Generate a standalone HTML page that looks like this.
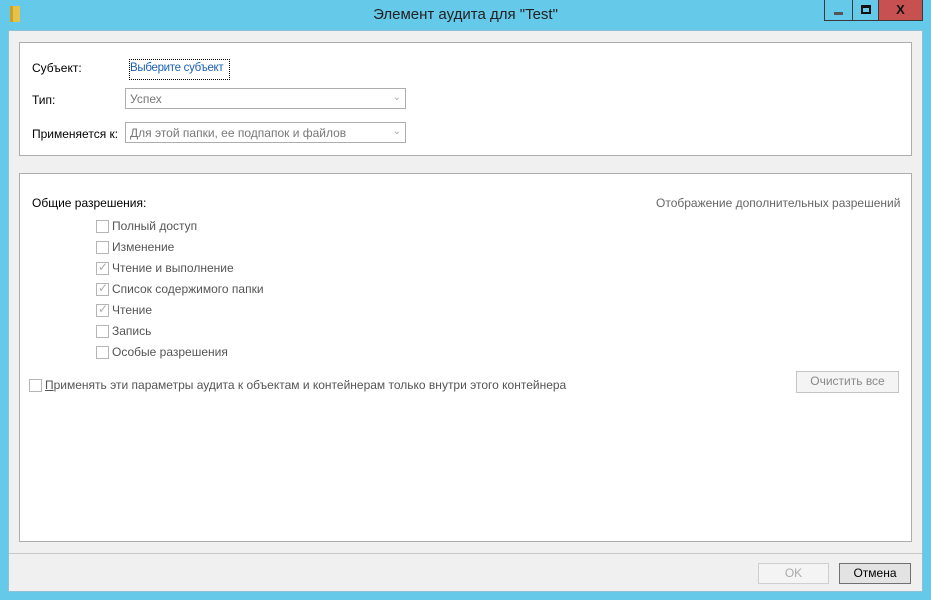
<!DOCTYPE html>
<html><head><meta charset="utf-8"><style>
*{margin:0;padding:0;box-sizing:border-box}
body{width:931px;height:600px;background:#65c9ea;font-family:"Liberation Sans",sans-serif;font-size:12px;color:#000;position:relative;overflow:hidden}
.a{position:absolute;white-space:nowrap}
.client{left:8px;top:30px;width:915px;height:562px;background:#f0f0f0;border:1px solid #8fc0d6}
.panel{background:#fff;border:1px solid #adadad}
.cb{width:13px;height:13px;border:1px solid #b5b5b5;background:#fff}
.cb.c::after{content:"✓";position:absolute;left:1px;top:-3px;font-size:12px;color:#aaa}
.lbl{color:#555}
.sel{border:1px solid #adadad;background:#fff;height:21px;color:#777;padding:3px 4px}
.btn{border:1px solid #adadad;background:#e9e9e9;text-align:center;line-height:19px}
</style></head><body>
<div class="a" style="left:10px;top:6px;width:10px;height:16px;background:#e8c248;border-left:3px solid #c9a12b"></div>
<div class="a" style="left:0;top:6px;width:931px;text-align:center;font-size:15px;color:#222">Элемент аудита для "Test"</div>
<div class="a" style="left:824px;top:0;width:29px;height:21px;border:1px solid #3a3a3a;border-top:none"><div class="a" style="left:9px;top:12px;width:9px;height:3px;background:#555"></div></div>
<div class="a" style="left:852px;top:0;width:27px;height:21px;border:1px solid #3a3a3a;border-top:none"><div class="a" style="left:8px;top:5px;width:10px;height:9px;border:2px solid #111;border-top-width:3px"></div></div>
<div class="a" style="left:878px;top:0;width:45px;height:21px;background:#c75050;border:1px solid #3a3a3a;border-top:none;color:#111;font-weight:bold;text-align:center;font-size:13px;line-height:19px">X</div>
<div class="a client"></div>
<div class="a panel" style="left:19px;top:42px;width:893px;height:114px"></div>
<div class="a" style="left:32px;top:61px">Субъект:</div>
<div class="a" style="left:129px;top:59px;width:101px;height:21px;border:1px dotted #000;color:#1a5fb4;padding:2px 0 0 0;font-size:11.5px;letter-spacing:-0.3px;overflow:hidden">Выберите субъект</div>
<div class="a" style="left:32px;top:93px">Тип:</div>
<div class="a sel" style="left:125px;top:88px;width:281px">Успех<span style="float:right;color:#aaa;font-size:10px">⌄</span></div>
<div class="a" style="left:32px;top:127px">Применяется к:</div>
<div class="a sel" style="left:125px;top:122px;width:281px">Для этой папки, ее подпапок и файлов<span style="float:right;color:#aaa;font-size:10px">⌄</span></div>
<div class="a panel" style="left:19px;top:173px;width:893px;height:369px"></div>
<div class="a" style="left:32px;top:196px">Общие разрешения:</div>
<div class="a lbl" style="left:656px;top:196px;color:#666">Отображение дополнительных разрешений</div>
<div class="a cb" style="left:96px;top:220px"></div><div class="a lbl" style="left:112px;top:219px">Полный доступ</div>
<div class="a cb" style="left:96px;top:241px"></div><div class="a lbl" style="left:112px;top:240px">Изменение</div>
<div class="a cb c" style="left:96px;top:262px"></div><div class="a lbl" style="left:112px;top:261px">Чтение и выполнение</div>
<div class="a cb c" style="left:96px;top:283px"></div><div class="a lbl" style="left:112px;top:282px">Список содержимого папки</div>
<div class="a cb c" style="left:96px;top:304px"></div><div class="a lbl" style="left:112px;top:303px">Чтение</div>
<div class="a cb" style="left:96px;top:325px"></div><div class="a lbl" style="left:112px;top:324px">Запись</div>
<div class="a cb" style="left:96px;top:346px"></div><div class="a lbl" style="left:112px;top:345px">Особые разрешения</div>
<div class="a cb" style="left:29px;top:379px"></div><div class="a lbl" style="left:45px;top:378px"><u>П</u>рименять эти параметры аудита к объектам и контейнерам только внутри этого контейнера</div>
<div class="a btn" style="left:796px;top:371px;width:103px;height:22px;color:#888;background:#f4f4f4;border-color:#c5c5c5">Очистить все</div>
<div class="a" style="left:9px;top:553px;width:913px;height:1px;background:#c8c8c8"></div>
<div class="a btn" style="left:758px;top:563px;width:71px;height:21px;color:#aaa;background:#f4f4f4;border-color:#cfcfcf">OK</div>
<div class="a btn" style="left:839px;top:563px;width:72px;height:21px;border-color:#707070;background:#e3e3e3">Отмена</div>
</body></html>
